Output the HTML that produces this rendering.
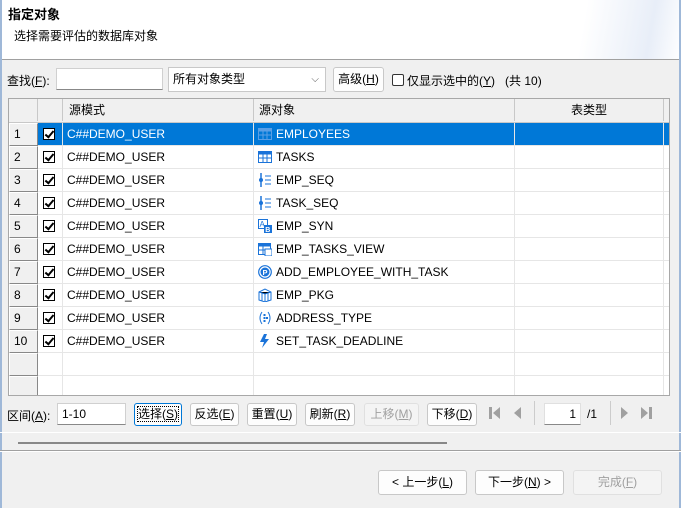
<!DOCTYPE html>
<html><head><meta charset="utf-8"><style>
*{box-sizing:border-box;margin:0;padding:0}
body{width:681px;height:508px;overflow:hidden;background:#f0f0f0;font-family:"Liberation Sans","Noto Sans CJK SC",sans-serif;font-size:12px;color:#000;position:relative}
.abs{position:absolute}
.hdr{left:0;top:0;width:681px;height:60px;border-bottom:1px solid #a0a0a0;background:linear-gradient(100deg,#fff 85%,#e8eef8 95%,#fff 100%)}
.btn{position:absolute;height:23px;border:1px solid #c8c8c8;border-radius:3px;background:#fdfdfd;text-align:center;line-height:21px;font-size:12px;white-space:nowrap}
.inp{position:absolute;height:22px;background:#fff;border:1px solid #d0d0d0;border-bottom:1px solid #888;line-height:20px;padding-left:4px}
.tbl{left:8px;top:98px;width:662px;height:298px;background:#fff;border:1px solid #a8a8a8;overflow:hidden}
.row{position:absolute;left:0;width:662px;height:23px;border-bottom:1px solid #e6e6e6}
.rn{position:absolute;left:0;width:29px;height:23px;background:#f0f0f0;border-right:1px solid #888;border-bottom:1px solid #888;border-top:1px solid #fff;border-left:1px solid #fff;line-height:21px;padding-left:4px;font-size:12px}
.cell{position:absolute;top:0;height:22px;line-height:22px;border-right:1px solid #e6e6e6;white-space:nowrap}
.cb{position:absolute;top:5px;width:12px;height:12px;border:1.5px solid #000;background:#fff}
.cb:after{content:"";position:absolute;left:3px;top:0px;width:3px;height:7px;border:solid #000;border-width:0 2px 2px 0;transform:rotate(40deg)}
.sel{background:#0078d7;color:#fff}
.ic{position:absolute;top:4px;width:14px;height:14px}
</style></head><body>
<div class="abs hdr"></div>
<div class="abs" style="left:8px;top:4px;font-weight:bold;font-size:13px">指定对象</div>
<div class="abs" style="left:14px;top:27px;font-size:12px">选择需要评估的数据库对象</div>
<div class="abs" style="left:0;top:0;width:2px;height:508px;background:#9fb8d8"></div>
<div class="abs" style="left:679px;top:0;width:2px;height:508px;background:#9fb8d8"></div>

<div class="abs" style="left:7px;top:72px">查找(<u>F</u>):</div>
<div class="inp" style="left:56px;top:68px;width:107px"></div>
<div class="inp" style="left:168px;top:67px;width:158px;height:25px;border:1px solid #c8c8c8;line-height:23px">所有对象类型<span style="position:absolute;right:6px;top:0;font-size:10px;color:#555">⌵</span></div>
<div class="btn" style="left:333px;top:67px;width:51px;height:25px;line-height:23px">高级(<u>H</u>)</div>
<div class="abs" style="left:392px;top:74px;width:12px;height:12px;border:1px solid #333;border-radius:2px;background:#fff"></div>
<div class="abs" style="left:407px;top:72px">仅显示选中的(<u>Y</u>)&nbsp;&nbsp;&nbsp;(共 10)</div>

<div class="abs tbl">
 <div class="row" style="top:0;height:24px;background:#f0f0f0;border-bottom:1px solid #c8c8c8">
  <div class="cell" style="left:0;width:29px;border-right:1px solid #c8c8c8"></div>
  <div class="cell" style="left:29px;width:25px;border-right:1px solid #c8c8c8"></div>
  <div class="cell" style="left:54px;width:191px;padding-left:6px;border-right:1px solid #c8c8c8">源模式</div>
  <div class="cell" style="left:245px;width:261px;padding-left:5px;border-right:1px solid #c8c8c8">源对象</div>
  <div class="cell" style="left:506px;width:149px;text-align:center;border-right:1px solid #c8c8c8">表类型</div>
 </div>
 <div id="rows"></div>
</div>
<script>
(function(){
var names=["EMPLOYEES","TASKS","EMP_SEQ","TASK_SEQ","EMP_SYN","EMP_TASKS_VIEW","ADD_EMPLOYEE_WITH_TASK","EMP_PKG","ADDRESS_TYPE","SET_TASK_DEADLINE"];
var c="#1a73d9";
function tb(c){return '<svg class="ic" STY viewBox="0 0 14 14"><rect x="0.5" y="1.5" width="13" height="11" fill="none" stroke="'+c+'"/><rect x="0.5" y="1.5" width="13" height="3" fill="'+c+'"/><path d="M0 8h14M5 4v9M9 4v9" stroke="'+c+'"/></svg>';}
var sq='<svg class="ic" STY viewBox="0 0 14 14"><path d="M3 0v14" stroke="'+c+'" stroke-width="1.5"/><circle cx="3" cy="7" r="2" fill="'+c+'"/><path d="M7 3h6M7 7h6M7 11h6" stroke="'+c+'"/></svg>';
var icons=[tb("#5a9fe6"),tb(c),sq,sq,
'<svg class="ic" STY viewBox="0 0 14 14"><rect x="0.5" y="0.5" width="9" height="9" fill="none" stroke="'+c+'"/><text x="1.5" y="8" font-size="8" fill="'+c+'" font-family="Liberation Sans">A</text><rect x="6" y="6" width="8" height="8" fill="'+c+'"/><text x="7.3" y="13" font-size="7" fill="#fff" font-weight="bold" font-family="Liberation Sans">B</text></svg>',
'<svg class="ic" STY viewBox="0 0 14 14"><rect x="0.5" y="1.5" width="12" height="11" fill="none" stroke="'+c+'"/><rect x="0.5" y="1.5" width="12" height="3" fill="'+c+'"/><path d="M0 8h8M5 4v9" stroke="'+c+'"/><rect x="7" y="7" width="7" height="7" fill="#fff" stroke="'+c+'"/></svg>',
'<svg class="ic" STY viewBox="0 0 14 14"><circle cx="7" cy="7" r="6.3" fill="none" stroke="'+c+'" stroke-width="1.2"/><circle cx="7" cy="7" r="4.5" fill="'+c+'"/><text x="4.5" y="10" font-size="7.5" font-weight="bold" fill="#fff" font-family="Liberation Sans">P</text></svg>',
'<svg class="ic" STY viewBox="0 0 14 14"><path d="M1 4l6-3 6 3v8l-6 2-6-2z" fill="none" stroke="'+c+'"/><path d="M1 4l6 2 6-2M7 6v8M4 5v8M10 5v8" stroke="'+c+'"/></svg>',
'<svg class="ic" STY viewBox="0 0 14 14"><path d="M4 1Q0 7 4 13M10 1Q14 7 10 13" fill="none" stroke="'+c+'"/><rect x="5.5" y="3" width="2" height="2" fill="'+c+'"/><rect x="5.5" y="6" width="2" height="2" fill="'+c+'"/><rect x="5.5" y="9" width="2" height="2" fill="'+c+'"/><rect x="8" y="6" width="2" height="2" fill="'+c+'"/></svg>',
'<svg class="ic" STY viewBox="0 0 14 14"><path d="M6 0L2 8h4l-2 6 7-9H7l2-5z" fill="'+c+'"/></svg>'
];
var h="";
for(var i=0;i<12;i++){
 var ty=24+i*23, s=(i==0);
 h+='<div class="row" style="top:'+ty+'px">';
 h+='<div class="rn" style="top:0">'+(i<10?(i+1):'')+'</div>';
 if(i<10){
  var bg=s?'class="cell sel"':'class="cell"';
  h+='<div '+bg+' style="left:29px;width:25px"></div><div class="cb" style="left:34px"></div>';
  h+='<div '+bg+' style="left:54px;width:191px;padding-left:4px">C##DEMO_USER</div>';
  h+='<div '+bg+' style="left:245px;width:261px;padding-left:22px">'+names[i]+'</div>'+icons[i].replace('STY','style="left:249px"');
  h+='<div '+bg+' style="left:506px;width:149px"></div><div '+bg+' style="left:655px;width:10px;border:none"></div>';
 } else {
  h+='<div class="cell" style="left:29px;width:25px"></div><div class="cell" style="left:54px;width:191px"></div><div class="cell" style="left:245px;width:261px"></div><div class="cell" style="left:506px;width:149px"></div>';
 }
 h+='</div>';
}
document.getElementById('rows').innerHTML=h;
})();
</script>

<div class="abs" style="left:7px;top:407px">区间(<u>A</u>):</div>
<div class="inp" style="left:57px;top:403px;width:69px">1-10</div>
<div class="btn" style="left:134px;top:403px;width:48px;border:1px solid #0078d7"><span style="outline:1px dotted #000">选择(<u>S</u>)</span></div>
<div class="btn" style="left:190px;top:403px;width:49px">反选(<u>E</u>)</div>
<div class="btn" style="left:247px;top:403px;width:50px">重置(<u>U</u>)</div>
<div class="btn" style="left:305px;top:403px;width:50px">刷新(<u>R</u>)</div>
<div class="btn" style="left:364px;top:403px;width:55px;color:#a0a0a0;background:#f4f4f4;border-color:#e0e0e0">上移(<u>M</u>)</div>
<div class="btn" style="left:427px;top:403px;width:50px">下移(<u>D</u>)</div>
<svg class="abs" style="left:488px;top:406px" width="36" height="14" viewBox="0 0 36 14"><rect x="1" y="1" width="3" height="12" fill="#a0a0a0"/><path d="M12 1L5 7l7 6z" fill="#a0a0a0"/><path d="M33 1l-7 6 7 6z" fill="#a0a0a0"/></svg>
<div class="abs" style="left:534px;top:401px;width:1px;height:24px;background:#ccc"></div>
<div class="inp" style="left:544px;top:403px;width:37px;text-align:right;padding-right:4px;border-color:#e0e0e0 #e0e0e0 #888">1</div>
<div class="abs" style="left:587px;top:407px">/1</div>
<div class="abs" style="left:610px;top:401px;width:1px;height:24px;background:#ccc"></div>
<svg class="abs" style="left:618px;top:406px" width="36" height="14" viewBox="0 0 36 14"><path d="M3 1l7 6-7 6z" fill="#a0a0a0"/><path d="M23 1l7 6-7 6z" fill="#a0a0a0"/><rect x="31" y="1" width="3" height="12" fill="#a0a0a0"/></svg>

<div class="abs" style="left:0;top:432px;width:681px;height:1px;background:#fff"></div>
<div class="abs" style="left:18px;top:442px;width:429px;height:2px;background:#888"></div>
<div class="abs" style="left:0;top:450px;width:681px;height:1px;background:#a0a0a0"></div>
<div class="abs" style="left:0;top:451px;width:681px;height:1px;background:#fff"></div>

<div class="btn" style="left:378px;top:470px;width:89px;height:25px;line-height:23px">&lt; 上一步(<u>L</u>)</div>
<div class="btn" style="left:475px;top:470px;width:89px;height:25px;line-height:23px">下一步(<u>N</u>) &gt;</div>
<div class="btn" style="left:573px;top:470px;width:89px;height:25px;line-height:23px;color:#a0a0a0;background:#f4f4f4;border-color:#e0e0e0">完成(<u>F</u>)</div>
</body></html>
